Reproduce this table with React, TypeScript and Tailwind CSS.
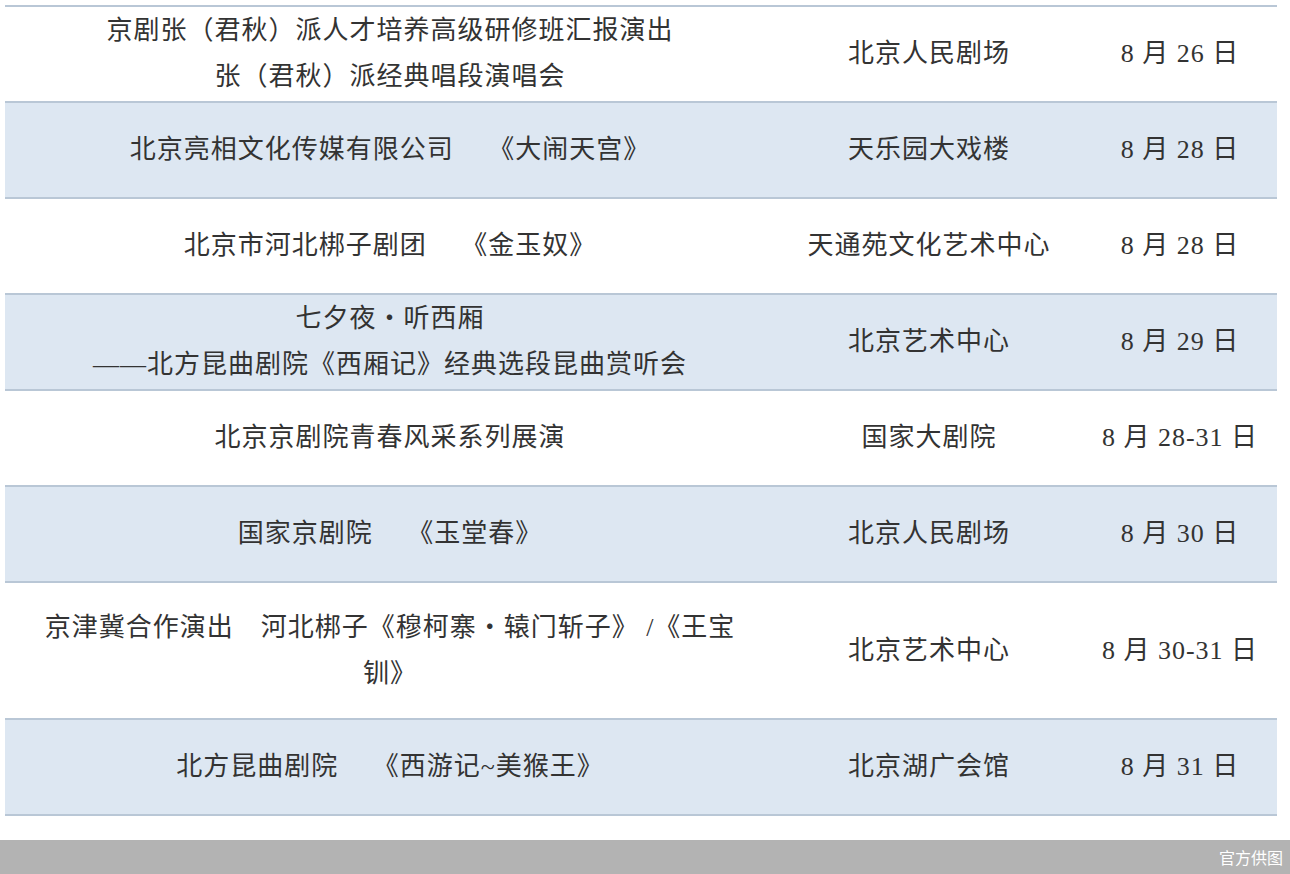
const rows: { name: string[]; venue: string; date: string; blue: boolean; h: string }[] = [
  {
    name: ["京剧张（君秋）派人才培养高级研修班汇报演出", "张（君秋）派经典唱段演唱会"],
    venue: "北京人民剧场",
    date: "8 月 26 日",
    blue: false,
    h: "h-[96px]",
  },
  { name: ["北京亮相文化传媒有限公司　 《大闹天宫》"], venue: "天乐园大戏楼", date: "8 月 28 日", blue: true, h: "h-[96px]" },
  { name: ["北京市河北梆子剧团　 《金玉奴》"], venue: "天通苑文化艺术中心", date: "8 月 28 日", blue: false, h: "h-[96px]" },
  {
    name: ["七夕夜・听西厢", "——北方昆曲剧院《西厢记》经典选段昆曲赏听会"],
    venue: "北京艺术中心",
    date: "8 月 29 日",
    blue: true,
    h: "h-[96px]",
  },
  { name: ["北京京剧院青春风采系列展演"], venue: "国家大剧院", date: "8 月 28-31 日", blue: false, h: "h-[96px]" },
  { name: ["国家京剧院　 《玉堂春》"], venue: "北京人民剧场", date: "8 月 30 日", blue: true, h: "h-[96px]" },
  {
    name: ["京津冀合作演出　河北梆子《穆柯寨・辕门斩子》 /《王宝", "钏》"],
    venue: "北京艺术中心",
    date: "8 月 30-31 日",
    blue: false,
    h: "h-[137px]",
  },
  { name: ["北方昆曲剧院　 《西游记~美猴王》"], venue: "北京湖广会馆", date: "8 月 31 日", blue: true, h: "h-[96px]" },
];

export default function App() {
  return (
    <div className="w-[1290px] h-[874px] bg-white flex flex-col font-['Liberation_Serif','Noto_Sans_CJK_SC',serif] text-[#333] overflow-hidden">
      <div className="ml-[5px] mt-[5px] w-[1272px] flex flex-col border-t-2 border-[#b9c7d6]">
        {rows.map((r, i) => (
          <div
            key={i}
            className={`grid grid-cols-[770px_308px_194px] items-center border-b-2 border-[#b9c7d6] ${r.h} ${
              r.blue ? "bg-[#dde7f2]" : "bg-white"
            }`}
          >
            <div className="flex flex-col items-center text-[26px] leading-[46px] tracking-[1px]">
              {r.name.map((l, j) => (
                <span key={j} className="whitespace-pre">
                  {l}
                </span>
              ))}
            </div>
            <div className="text-center text-[26px] leading-[46px] tracking-[1px]">{r.venue}</div>
            <div className="text-center text-[26px] leading-[46px] tracking-[1px] whitespace-pre">{r.date}</div>
          </div>
        ))}
      </div>
      <div className="flex-1" />
      <div className="h-[34px] bg-[#b3b3b3] flex items-center justify-end pr-[7px]">
        <span className="text-white text-[16px] font-['Noto_Sans_CJK_SC',sans-serif]">官方供图</span>
      </div>
    </div>
  );
}
